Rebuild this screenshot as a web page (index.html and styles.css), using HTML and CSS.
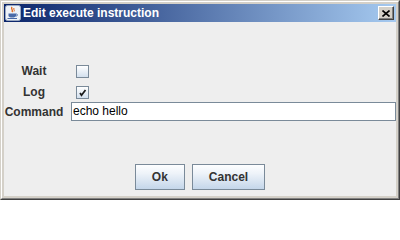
FILE: index.html
```html
<!DOCTYPE html>
<html>
<head>
<meta charset="utf-8">
<link rel="stylesheet" href="styles.css">
</head>
<body>
<div class="window">
  <div class="frame">
    <div class="titlebar">
      <svg class="app-icon" width="16" height="16" viewBox="0 0 16 16">
        <rect x="0.5" y="0.5" width="15" height="15" rx="2" fill="#eef2f8" stroke="#9aa8c0"/>
        <path d="M7 2 C5.5 4 8.5 5 7 7" stroke="#e06010" stroke-width="1.3" fill="none"/>
        <path d="M9 3 C8 4.5 10 5 9 6.5" stroke="#e06010" stroke-width="1" fill="none"/>
        <path d="M3.5 8.5 H11 V10.5 C11 12 9.5 12.5 7.2 12.5 C5 12.5 3.5 12 3.5 10.5 Z" fill="#4a6aa8"/>
        <path d="M11 9 C13 9 13 11 11 11" stroke="#4a6aa8" stroke-width="1" fill="none"/>
        <path d="M2.5 13.5 H12" stroke="#4a6aa8" stroke-width="1"/>
      </svg>
      <span class="title">Edit execute instruction</span>
      <div class="close-btn">
        <svg width="8" height="7" viewBox="0 0 8 7">
          <path d="M0.5 0.5 L7.5 6.5 M7.5 0.5 L0.5 6.5" stroke="#000" stroke-width="1.6"/>
        </svg>
      </div>
    </div>
    <div class="content">
      <div class="form">
        <div class="label">Wait</div>
        <div class="field"><span class="checkbox"></span></div>
        <div class="label">Log</div>
        <div class="field"><span class="checkbox checked">
          <svg width="11" height="11" viewBox="0 0 11 11"><path d="M3 6 L4.5 8.3 L8.5 3" stroke="#1a1a1a" stroke-width="1.7" fill="none"/></svg>
        </span></div>
        <div class="label">Command</div>
        <div class="field"><div class="textfield">echo hello</div></div>
      </div>
      <div class="buttons">
        <div class="btn">Ok</div>
        <div class="btn">Cancel</div>
      </div>
    </div>
  </div>
</div>
</body>
</html>
```
FILE: styles.css
```css
body {
  margin: 0;
  font-family: "Liberation Sans", Arial, sans-serif;
}
.window {
  width: 400px;
  height: 200px;
  box-sizing: border-box;
  border: 1px solid;
  border-color: #d4d0c8 #404040 #404040 #d4d0c8;
}
.frame {
  height: 100%;
  box-sizing: border-box;
  border: 1px solid;
  border-color: #ffffff #808080 #808080 #ffffff;
  padding: 2px;
  background: #d4d0c8;
  display: flex;
  flex-direction: column;
}
.titlebar {
  height: 18px;
  flex: none;
  background: linear-gradient(to right, #0a246a, #a6caf0);
  display: flex;
  align-items: center;
  padding: 0 2px 0 1px;
}
.app-icon {
  flex: none;
}
.title {
  color: #ffffff;
  font-weight: bold;
  font-size: 12px;
  margin-left: 2px;
  flex: 1;
  white-space: nowrap;
}
.close-btn {
  width: 14px;
  height: 12px;
  background: #d4d0c8;
  border: 1px solid;
  border-color: #ffffff #404040 #404040 #ffffff;
  box-shadow: inset -1px -1px 0 #808080;
  display: flex;
  align-items: center;
  justify-content: center;
}
.content {
  flex: 1;
  background: #eeeeee;
  display: flex;
  flex-direction: column;
}
.form {
  display: grid;
  grid-template-columns: 60px 1fr;
  grid-template-rows: 22px 20px 19px;
  column-gap: 7px;
  padding-top: 38px;
}
.label {
  font-size: 12px;
  font-weight: bold;
  color: #333333;
  text-align: center;
  align-self: center;
  white-space: nowrap;
}
.field {
  display: flex;
  align-items: center;
}
.checkbox {
  width: 11px;
  height: 11px;
  margin-left: 5px;
  border: 1px solid #7a8a99;
  background: linear-gradient(#ffffff, #d3e0ee);
  display: flex;
  align-items: center;
  justify-content: center;
}
.textfield {
  flex: 1;
  height: 17px;
  border: 1px solid #7a8a99;
  background: #ffffff;
  font-size: 12px;
  line-height: 17px;
  padding-left: 1px;
  color: #000000;
}
.buttons {
  margin-top: auto;
  display: flex;
  justify-content: center;
  gap: 7px;
  padding-bottom: 6px;
}
.btn {
  height: 24px;
  padding: 0 16px;
  border: 1px solid #7a8a99;
  background: linear-gradient(#fdfeff 0%, #eef3f9 35%, #c4d6ea 100%);
  font-size: 12px;
  font-weight: bold;
  color: #333333;
  display: flex;
  align-items: center;
}
```
